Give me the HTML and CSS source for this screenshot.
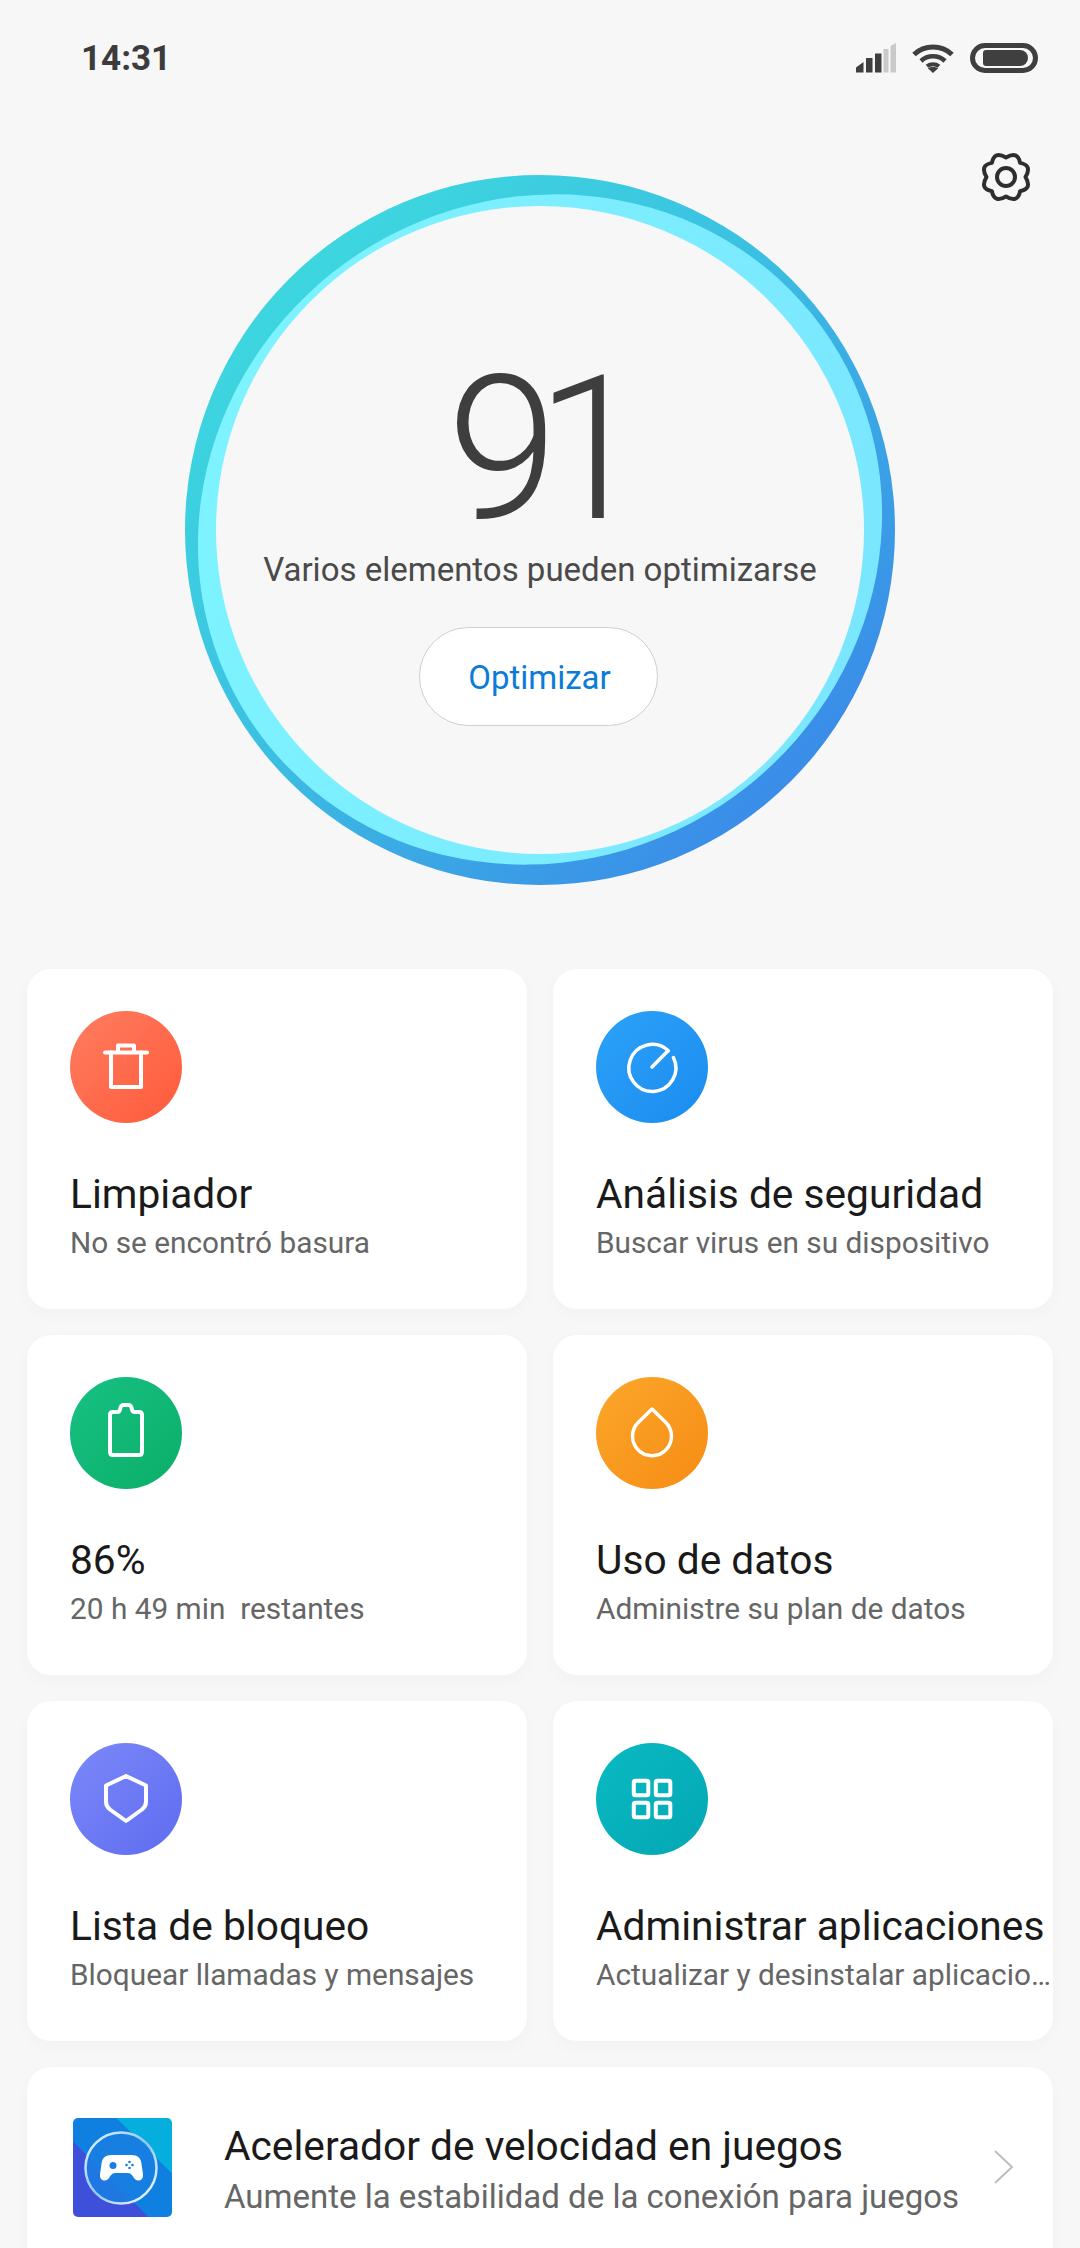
FILE: index.html
```html
<!DOCTYPE html>
<html lang="es">
<head>
  <meta charset="UTF-8">
  <title>Seguridad</title>
  <link rel="stylesheet" href="styles.css">
</head>

<body>
  <div class="status-bar">
    <span class="time">14:31</span>
    <div class="status-icons">
      <svg class="signal" width="40" height="30" viewBox="0 0 40 30">
        <path d="M0 29.500V24.500L7.500 19V29.500Z" fill="#3f3f3f"/>
        <rect x="10" y="15" width="6.500" height="14.500" fill="#3f3f3f"/>
        <rect x="19" y="10.500" width="6.500" height="19" fill="#3f3f3f"/>
        <rect x="27.500" y="6" width="5" height="23.500" fill="#c9c9c9"/>
        <path d="M34.500 3L40 0V29.500H34.500Z" fill="#c9c9c9"/>
      </svg>
      <svg class="wifi" width="42" height="30" viewBox="0 0 42 30">
        <path d="M2 11.500C12.500 1.500 29.500 1.500 40 11.500" fill="none" stroke="#3f3f3f" stroke-width="5"/>
        <path d="M9 18C15.500 11.800 26.500 11.800 33 18" fill="none" stroke="#3f3f3f" stroke-width="4.500"/>
        <path d="M15 23.300C18.300 20.600 23.700 20.600 27 23.300" fill="none" stroke="#3f3f3f" stroke-width="4"/>
        <path d="M21 30L15.800 25.300C18.800 23.400 23.200 23.400 26.200 25.300Z" fill="#3f3f3f"/>
      </svg>
      <div class="battery"><div class="battery-level"></div></div>
    </div>
  </div>

  <div class="hero">
    <svg class="gear" width="54" height="54" viewBox="0 0 54 54">
      <path d="M27 7.500Q38.800 0.500 41.100 12.900Q53.500 15.200 46.500 27Q53.500 38.800 41.100 41.100Q38.800 53.500 27 46.500Q15.200 53.500 12.900 41.100Q0.500 38.800 7.500 27Q0.500 15.200 12.900 12.900Q15.200 0.500 27 7.500Z" fill="none" stroke="#2e2e2e" stroke-width="4" stroke-linejoin="round"/>
      <circle cx="27" cy="27" r="9" fill="none" stroke="#2e2e2e" stroke-width="4"/>
    </svg>

    <div class="ring">
      <svg class="ring-art" width="710" height="710" viewBox="0 0 710 710">
        <defs>
          <linearGradient id="ring-outer" x1="0.150" y1="0.150" x2="0.850" y2="0.850">
            <stop offset="0" stop-color="#3dd6df"/>
            <stop offset="0.450" stop-color="#3bbfe2"/>
            <stop offset="1" stop-color="#3a8de8"/>
          </linearGradient>
          <linearGradient id="ring-light" x1="0" y1="0" x2="1" y2="1">
            <stop offset="0" stop-color="#7ef6ff"/>
            <stop offset="1" stop-color="#7ae4ff"/>
          </linearGradient>
        </defs>
        <circle cx="355" cy="355" r="355" fill="url(#ring-outer)"/>
        <ellipse cx="355" cy="354.500" rx="347" ry="330" transform="rotate(-33 355 354.500)" fill="url(#ring-light)"/>
        <circle cx="355" cy="355" r="324" fill="#f7f7f7"/>
      </svg>
      <div class="ring-content">
        <div class="score">91</div>
        <p class="score-text">Varios elementos pueden optimizarse</p>
        <div class="optimize-btn">Optimizar</div>
      </div>
    </div>
  </div>

  <div class="cards">
    <div class="card">
      <div class="circle red">
        <svg width="112" height="112" viewBox="0 0 112 112" class="line-icon">
          <path d="M35 41.500H77"/>
          <path d="M41 41.500V76H71V41.500"/>
          <path d="M48 41V34.500H64V41"/>
        </svg>
      </div>
      <div class="card-title">Limpiador</div>
      <div class="card-sub">No se encontró basura</div>
    </div>
    <div class="card">
      <div class="circle blue">
        <svg width="112" height="112" viewBox="0 0 112 112" class="line-icon thin">
          <path d="M72.300 39.700A23.500 23.500 0 1 0 77.400 46.500"/>
          <path d="M56 56L72 39.700"/>
        </svg>
      </div>
      <div class="card-title">Análisis de seguridad</div>
      <div class="card-sub">Buscar virus en su dispositivo</div>
    </div>
    <div class="card">
      <div class="circle green">
        <svg width="112" height="112" viewBox="0 0 112 112" class="line-icon">
          <path d="M40 75V38C40 36 41 35 43 35H47.500C49 35 49.500 34.500 50 32.500C50.300 31 51 28 53 28H59C61 28 61.700 31 62 32.500C62.500 34.500 63 35 64.500 35H69C71 35 72 36 72 38V75C72 77 71 78 69 78H43C41 78 40 77 40 75Z"/>
        </svg>
      </div>
      <div class="card-title">86%</div>
      <div class="card-sub">20 h 49 min &nbsp;restantes</div>
    </div>
    <div class="card">
      <div class="circle orange">
        <svg width="112" height="112" viewBox="0 0 112 112" class="line-icon thin">
          <path d="M56 32L42.200 45.400A19.500 19.500 0 1 0 69.800 45.400Z"/>
        </svg>
      </div>
      <div class="card-title">Uso de datos</div>
      <div class="card-sub">Administre su plan de datos</div>
    </div>
    <div class="card">
      <div class="circle purple">
        <svg width="112" height="112" viewBox="0 0 112 112" class="line-icon">
          <path d="M56 33L76 42.500V59C76 62 74.500 64.500 72 66.500L56 78L40 66.500C37.500 64.500 36 62 36 59V42.500Z"/>
        </svg>
      </div>
      <div class="card-title">Lista de bloqueo</div>
      <div class="card-sub">Bloquear llamadas y mensajes</div>
    </div>
    <div class="card">
      <div class="circle teal">
        <svg width="112" height="112" viewBox="0 0 112 112" class="line-icon">
          <rect x="37.800" y="37.800" width="14.500" height="14.500" rx="1.500"/>
          <rect x="59.800" y="37.800" width="14.500" height="14.500" rx="1.500"/>
          <rect x="37.800" y="59.800" width="14.500" height="14.500" rx="1.500"/>
          <rect x="59.800" y="59.800" width="14.500" height="14.500" rx="1.500"/>
        </svg>
      </div>
      <div class="card-title">Administrar aplicaciones</div>
      <div class="card-sub">Actualizar y desinstalar aplicaciones</div>
    </div>

    <div class="card wide">
      <div class="game-icon">
        <svg width="99" height="99" viewBox="0 0 99 99">
          <defs>
            <linearGradient id="disc" x1="0" y1="0" x2="1" y2="1">
              <stop offset="0" stop-color="#e8f6ff"/>
              <stop offset="0.500" stop-color="#8cc8f5"/>
              <stop offset="1" stop-color="#ffffff"/>
            </linearGradient>
          </defs>
          <circle cx="48" cy="50" r="35.500" fill="#1a7fe2" fill-opacity="0.850" stroke="url(#disc)" stroke-width="2.500"/>
          <path d="M38 38H58C64 38 67.500 41 68 47L69.500 57C70 61 68 63.500 65 63.500C62.500 63.500 61 62 59.500 59.500C58 57 56.500 56 54 56H42C39.500 56 38 57 36.500 59.500C35 62 33.500 63.500 31 63.500C28 63.500 26 61 26.500 57L28 47C28.500 41 32 38 38 38Z" transform="translate(0.500 -1)" fill="#ffffff"/>
          <circle cx="40" cy="47.500" r="3.500" fill="#1a7fe2"/>
          <circle cx="56.500" cy="44" r="1.300" fill="#1a7fe2"/>
          <circle cx="56.500" cy="50" r="1.300" fill="#1a7fe2"/>
          <circle cx="53.500" cy="47" r="1.300" fill="#1a7fe2"/>
          <circle cx="59.500" cy="47" r="1.300" fill="#1a7fe2"/>
        </svg>
      </div>
      <div class="wide-text">
        <div class="wide-title">Acelerador de velocidad en juegos</div>
        <div class="wide-sub">Aumente la estabilidad de la conexión para juegos</div>
      </div>
      <svg class="chevron" width="20" height="34" viewBox="0 0 20 34">
        <path d="M1 1L18 17L1 33" fill="none" stroke="#bdbdbd" stroke-width="2"/>
      </svg>
    </div>
  </div>
</body>
</html>
```

FILE: styles.css
```css
* { box-sizing: border-box; }

html, body {
  margin: 0;
  height: 2248px;
  overflow: hidden;
}

body {
  background: #f7f7f7;
  font-family: Roboto, "Liberation Sans", sans-serif;
  color: #1a1a1a;
}

/* status bar */
.status-bar {
  display: flex;
  align-items: center;
  justify-content: space-between;
  height: 116px;
  padding: 0 42px 0 81px;
}
.time {
  font-size: 35px;
  font-weight: 700;
  color: #3c3c3c;
}
.status-icons {
  display: flex;
  align-items: center;
  gap: 16px;
}
.battery {
  width: 68px;
  height: 30px;
  padding: 2px 5px 2px 8px;
  border: 5px solid #3f3f3f;
  border-radius: 15px;
}
.battery-level {
  width: 100%;
  height: 100%;
  background: #3f3f3f;
  border-radius: 3px 8px 8px 3px;
}

/* score ring */
.hero {
  position: relative;
  padding: 59px 0 84px;
}
.gear {
  position: absolute;
  top: 34px;
  left: 979px;
}
.ring {
  display: grid;
  width: 710px;
  height: 710px;
  margin: 0 auto;
}
.ring-art, .ring-content {
  grid-area: 1 / 1;
}
.ring-content {
  display: flex;
  flex-direction: column;
  align-items: center;
  padding-top: 175px;
}
.score {
  font-size: 200px;
  line-height: 200px;
  font-weight: 300;
  letter-spacing: -22px;
  color: #3e3e3e;
  margin-left: -8px;
}
.score-text {
  margin: 0 0 37px;
  font-size: 33px;
  line-height: 40px;
  color: #4a4a4a;
}
.optimize-btn {
  display: flex;
  align-items: center;
  justify-content: center;
  width: 239px;
  height: 99px;
  margin-left: -3px;
  padding: 2px 0 0 2px;
  background: #fff;
  border: 1px solid #cfcfcf;
  border-radius: 50px;
  font-size: 33px;
  color: #0a7cd8;
}

/* feature cards */
.cards {
  display: grid;
  grid-template-columns: 500px 500px;
  gap: 26px;
  padding: 0 27px;
}
.card {
  height: 340px;
  min-width: 0;
  padding: 42px 0 0 43px;
  background: #fff;
  border-radius: 24px;
  box-shadow: 0 6px 18px rgba(0, 0, 0, 0.025);
}
.circle {
  width: 112px;
  height: 112px;
  margin-bottom: 47px;
  border-radius: 50%;
}
.circle svg { display: block; }
.red    { background: linear-gradient(135deg, #ff7d60, #ff5a3a); }
.blue   { background: linear-gradient(135deg, #2ca2f8, #1b8cf0); }
.green  { background: linear-gradient(135deg, #17c183, #0bae68); }
.orange { background: linear-gradient(135deg, #fba72b, #f78c14); }
.purple { background: linear-gradient(135deg, #7c88f9, #5e6cf0); }
.teal   { background: linear-gradient(135deg, #0abac2, #03a7b4); }

.line-icon {
  fill: none;
  stroke: #fff;
  stroke-width: 4;
  stroke-linecap: round;
  stroke-linejoin: round;
}
.line-icon.thin { stroke-width: 3.500; }

.card-title {
  font-size: 40.700px;
  line-height: 48px;
  white-space: nowrap;
}
.card-sub {
  margin-top: 5px;
  font-size: 29.800px;
  line-height: 40px;
  color: #666;
  white-space: nowrap;
  overflow: hidden;
  text-overflow: ellipsis;
}

/* last wide card */
.card.wide {
  grid-column: 1 / 3;
  display: flex;
  align-items: flex-start;
  height: 220px;
  padding: 51px 39px 0 46px;
}
.game-icon {
  flex: none;
  width: 99px;
  height: 99px;
  border-radius: 5px;
  background: linear-gradient(225deg, #06aede 0 28%, #0f80e0 28% 62%, #3e50da 62%);
}
.game-icon svg { display: block; }
.wide-text {
  flex: 1;
  margin-left: 52px;
  padding-top: 4px;
}
.wide-title {
  font-size: 40.700px;
  line-height: 48px;
}
.wide-sub {
  margin-top: 5px;
  font-size: 33px;
  line-height: 44px;
  color: #666;
}
.chevron {
  margin-top: 32px;
}
```
